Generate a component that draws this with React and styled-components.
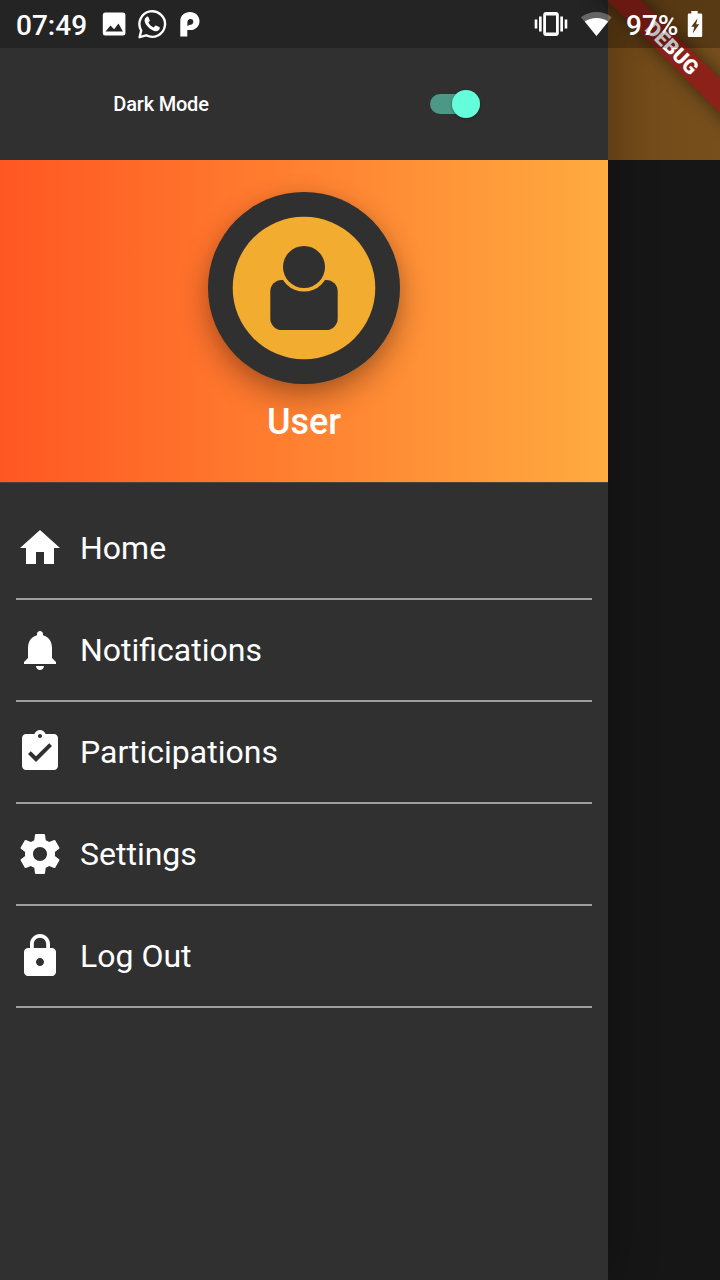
import React from "react";
import styled, { createGlobalStyle } from "styled-components";

const GlobalStyle = createGlobalStyle`
  * { box-sizing: border-box; }
  html, body { margin: 0; padding: 0; background: #161616; }
  body { font-family: Roboto, "Liberation Sans", sans-serif; color: #fff; }
`;

const Screen = styled.div`
  position: relative;
  width: 720px;
  height: 1280px;
  overflow: hidden;
  display: flex;
  background: #161616;
`;

const Drawer = styled.aside`
  position: relative;
  z-index: 1;
  width: 608px;
  height: 100%;
  flex: none;
  display: flex;
  flex-direction: column;
  background: #303030;
  box-shadow: 0 0 46px rgba(0, 0, 0, 0.3);
`;

const Backdrop = styled.div`
  flex: 1;
  background: #161616;
`;

const DimmedAppBar = styled.div`
  height: 160px;
  background: linear-gradient(90deg, #734918, #764f1d);
`;

const ModeRow = styled.div`
  height: 160px;
  padding-top: 48px;
  display: flex;
  align-items: center;
`;

const ModeCell = styled.div`
  flex: 0 0 ${(p) => p.$width}px;
  display: flex;
  justify-content: center;
`;

const ModeLabel = styled.span`
  font-size: 20px;
  font-weight: 500;
  line-height: 24px;
  letter-spacing: -0.2px;
`;

const SwitchTrack = styled.span`
  display: flex;
  align-items: center;
  justify-content: flex-end;
  width: 50.4px;
  height: 20px;
  border-radius: 10px;
  background: #4a9885;
`;

const SwitchThumb = styled.span`
  flex: none;
  width: 28px;
  height: 28px;
  border-radius: 50%;
  background: #64ffda;
  box-shadow: 0 1px 3px rgba(0, 0, 0, 0.3);
`;

const Header = styled.header`
  height: 323px;
  padding-top: 32px;
  display: flex;
  flex-direction: column;
  align-items: center;
  background: linear-gradient(90deg, #ff5722, #ffab40);
  border-bottom: 1px solid #46443c;
`;

const Avatar = styled.div`
  display: flex;
  align-items: center;
  justify-content: center;
  width: 192px;
  height: 192px;
  border-radius: 50%;
  background: #303030;
  box-shadow: 0 12px 30px rgba(0, 0, 0, 0.32), 0 2px 14px rgba(0, 0, 0, 0.06);
`;

const UserName = styled.h1`
  margin: 17px 0 0;
  font-size: 36px;
  font-weight: 500;
  line-height: 42px;
`;

const Menu = styled.nav`
  padding: 15px 16px 0;
`;

const MenuItem = styled.a`
  display: flex;
  align-items: center;
  gap: 16px;
  height: 102px;
  border-bottom: 2px solid #9e9e9e;
`;

const MenuLabel = styled.span`
  font-size: 32px;
  line-height: 38px;
`;

const StatusBar = styled.div`
  position: absolute;
  z-index: 3;
  inset: 0 0 auto 0;
  height: 48px;
  padding: 0 17px 0 16px;
  display: flex;
  align-items: center;
  background: rgba(0, 0, 0, 0.25);
`;

const StatusText = styled.span`
  width: ${(p) => p.$width}px;
  margin-left: ${(p) => p.$gap || 0}px;
  padding-top: 4px;
  font-size: 28px;
  font-weight: 500;
  line-height: 34px;
  white-space: nowrap;
`;

const StatusIcon = styled.svg`
  flex: none;
  display: block;
  margin-left: ${(p) => p.$gap || 0}px;
`;

const Spacer = styled.div`
  flex: 1;
`;

const Ribbon = styled.div`
  position: absolute;
  z-index: 2;
  left: 572px;
  top: 36px;
  width: 200px;
  height: 24px;
  display: flex;
  align-items: center;
  justify-content: center;
  transform: rotate(45deg);
  background: #8c2119;
  box-shadow: 0 0 18px rgba(0, 0, 0, 0.5);
  font-size: 20.4px;
  font-weight: 900;
  line-height: 24px;
`;

const icons = {
  home: "M10 20v-6h4v6h5v-8h3L12 3 2 12h3v8z",
  bell: "M12 22c1.1 0 2-.9 2-2h-4c0 1.1.89 2 2 2zm6-6v-5c0-3.07-1.64-5.64-4.5-6.32V4c0-.83-.67-1.5-1.5-1.5s-1.5.67-1.5 1.5v.68C7.63 5.36 6 7.92 6 11v5l-2 2v1h16v-1l-2-2z",
  clipboard: "M19 3h-4.18C14.4 1.84 13.3 1 12 1c-1.3 0-2.4.84-2.82 2H5c-1.1 0-2 .9-2 2v14c0 1.1.9 2 2 2h14c1.1 0 2-.9 2-2V5c0-1.1-.9-2-2-2zm-7 0c.55 0 1 .45 1 1s-.45 1-1 1-1-.45-1-1 .45-1 1-1zm-2 14l-4-4 1.41-1.41L10 14.17l6.59-6.59L18 9l-8 8z",
  gear: "M19.43 12.98c.04-.32.07-.64.07-.98s-.03-.66-.07-.98l2.11-1.65c.19-.15.24-.42.12-.64l-2-3.46c-.12-.22-.39-.3-.61-.22l-2.49 1c-.52-.4-1.08-.73-1.69-.98l-.38-2.65C14.46 2.18 14.25 2 14 2h-4c-.25 0-.46.18-.49.42l-.38 2.65c-.61.25-1.17.59-1.69.98l-2.49-1c-.23-.09-.49 0-.61.22l-2 3.46c-.13.22-.07.49.12.64l2.11 1.65c-.04.32-.07.65-.07.98s.03.66.07.98l-2.11 1.65c-.19.15-.24.42-.12.64l2 3.46c.12.22.39.3.61.22l2.49-1c.52.4 1.08.73 1.69.98l.38 2.65c.03.24.24.42.49.42h4c.25 0 .46-.18.49-.42l.38-2.65c.61-.25 1.17-.59 1.69-.98l2.49 1c.23.09.49 0 .61-.22l2-3.46c.12-.22.07-.49-.12-.64l-2.11-1.65zM12 15.5c-1.93 0-3.5-1.57-3.5-3.5s1.57-3.5 3.5-3.5 3.5 1.57 3.5 3.5-1.57 3.5-3.5 3.5z",
  lock: "M18 8h-1V6c0-2.76-2.24-5-5-5S7 3.24 7 6v2H6c-1.1 0-2 .9-2 2v10c0 1.1.9 2 2 2h12c1.1 0 2-.9 2-2V10c0-1.1-.9-2-2-2zm-6 9c-1.1 0-2-.9-2-2s.9-2 2-2 2 .9 2 2-.9 2-2 2zm3.1-9H8.9V6c0-1.71 1.39-3.1 3.1-3.1 1.71 0 3.1 1.39 3.1 3.1v2z",
};

const menuItems = [
  ["Home", "home"],
  ["Notifications", "bell"],
  ["Participations", "clipboard"],
  ["Settings", "gear"],
  ["Log Out", "lock"],
];

const MenuIcon = ({ name }) => (
  <svg width="48" height="48" viewBox="0 0 24 24" fill="#fff">
    <path d={icons[name]} />
  </svg>
);

const PersonBadge = () => (
  <svg width="144" height="144" viewBox="0 0 144 144">
    <circle cx="72" cy="72" r="71.3" fill="#f2ac2f" />
    <rect x="38.3" y="64" width="67.4" height="50" rx="11.5" fill="#303030" />
    <circle cx="72" cy="51" r="24.6" fill="#f2ac2f" />
    <circle cx="72" cy="51" r="21" fill="#303030" />
  </svg>
);

export default function App() {
  return (
    <>
      <GlobalStyle />
      <Screen>
        <Drawer>
          <ModeRow>
            <ModeCell $width={322}>
              <ModeLabel>Dark Mode</ModeLabel>
            </ModeCell>
            <ModeCell $width={266}>
              <SwitchTrack>
                <SwitchThumb />
              </SwitchTrack>
            </ModeCell>
          </ModeRow>
          <Header>
            <Avatar>
              <PersonBadge />
            </Avatar>
            <UserName>User</UserName>
          </Header>
          <Menu>
            {menuItems.map(([label, icon]) => (
              <MenuItem key={label}>
                <MenuIcon name={icon} />
                <MenuLabel>{label}</MenuLabel>
              </MenuItem>
            ))}
          </Menu>
        </Drawer>
        <Backdrop>
          <DimmedAppBar />
        </Backdrop>

        <Ribbon>DEBUG</Ribbon>

        <StatusBar>
          <StatusText $width={71}>07:49</StatusText>
          <StatusIcon $gap={15} width="24" height="24" viewBox="0 0 24 24">
            <path
              fill="#fff"
              fillRule="evenodd"
              d="M3.3.6h17.6a2.5 2.5 0 0 1 2.5 2.5v17.8a2.5 2.5 0 0 1-2.5 2.5H3.300A2.5 2.5 0 0 1 .8 20.9V3.1A2.5 2.5 0 0 1 3.300.6zM3.500 19.600h17.400L16.500 11.600l-4.400 5.600-3.600-3.800z"
            />
          </StatusIcon>
          <StatusIcon $gap={11} width="30" height="32" viewBox="0 0 30 32">
            <path
              d="M2.600 29.200 4.200 22.500a12.800 12.800 0 1 1 5 4.800z"
              fill="none"
              stroke="#fff"
              strokeWidth="2.4"
              strokeLinejoin="round"
            />
            <path
              fill="#fff"
              d="M9.500 8.900c.7-.6 1.700-.4 2 .3l1.200 2.800c.2.500 0 1-.4 1.400l-.9 1.100c1.100 2.300 2.800 4 5.300 5l1.300-1.500c.4-.4.900-.5 1.300-.3l2.900 1.400c.6.300.7.800.5 1.500-.5 1.900-2.300 2.800-4.200 2.600-5-.6-10.300-6-10.900-10.100-.2-1.700.6-3.200 1.900-4.200z"
            />
          </StatusIcon>
          <StatusIcon $gap={13} width="20" height="26" viewBox="0 0 20 26">
            <path
              fill="#fff"
              fillRule="evenodd"
              d="M.3 25.400V9.900C.3 4.500 4.500.9 9.900.9s9.600 3.800 9.600 9.100-3.900 9.100-9.200 9.100H7.300v6.300zM7.400 15.300V11.200c0-2 1-3.300 3-3.300a2.800 2.800 0 0 1 2.900 2.900c0 1.600-1.100 2.800-2.800 2.900-1.600.1-2.100.6-3.100 1.600z"
            />
          </StatusIcon>
          <Spacer />
          <StatusIcon width="34" height="26" viewBox="0 0 34 26" fill="#fff">
            <path
              fillRule="evenodd"
              d="M12.200 1h9.600A3 3 0 0 1 24.800 4v18a3 3 0 0 1-3 3h-9.600a3 3 0 0 1-3-3V4a3 3 0 0 1 3-3zM12 4.500v17h10v-17z"
            />
            <path d="M.7 8.500h2.600v9H.7zM5 5.500h2.700v15H5zM26.300 5.500H29v15h-2.700zM30.700 8.500h2.600v9h-2.600z" />
          </StatusIcon>
          <StatusIcon $gap={12} width="32" height="26" viewBox="0 0 32 26" fill="#fff">
            <path opacity=".3" d="M16.500 25 .9 6.200C5.300 3 10.500 1 16.500 1s11.200 2 15.200 5.200z" />
            <path d="M16.500 25 4.800 10.600C8 8.200 12 6.900 16.500 6.900s8.500 1.300 11.700 3.700z" />
          </StatusIcon>
          <StatusText $gap={14} $width={52}>
            97%
          </StatusText>
          <StatusIcon $gap={9} width="16" height="26" viewBox="0 0 16 26">
            <path
              fill="#fff"
              fillRule="evenodd"
              d="M4.300 0h6.400v2.500H14a1.200 1.200 0 0 1 1.200 1.200v21.100A1.200 1.200 0 0 1 14 26H2a1.200 1.200 0 0 1-1.200-1.200V3.700A1.200 1.200 0 0 1 2 2.500h2.300zM10.600 7.200 4.200 15.800h3.100L5.700 22.400l6.500-9.200H9.100z"
            />
          </StatusIcon>
        </StatusBar>
      </Screen>
    </>
  );
}
